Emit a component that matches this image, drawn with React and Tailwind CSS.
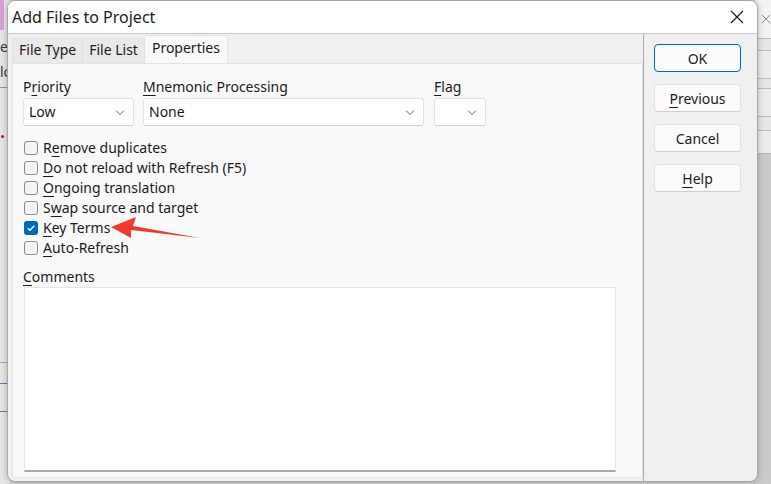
import React from 'react';

const font = { fontFamily: '"Noto Sans", "Open Sans", sans-serif' };

// letter with an access-key underline
const U = ({ children }) => <span className="underline underline-offset-[3px] decoration-1">{children}</span>;

const Chevron = () => (
  <svg width="12" height="12" viewBox="0 0 12 12" className="text-[#606060]">
    <path d="M2 4.5 L6 8.5 L10 4.5" fill="none" stroke="currentColor" strokeWidth="1" />
  </svg>
);

const Select = ({ value, className }) => (
  <div className={`h-[28px] bg-white border border-[#e3e3e3] border-b-[#d0d0d0] rounded-[3px] flex items-center justify-between pl-[5px] pr-[7px] text-[14px] text-[#1b1b1b] ${className}`}>
    <span className="-mt-[2px]">{value}</span>
    <Chevron />
  </div>
);

const Check = ({ checked, children }) => (
  <div className="h-[20px] flex items-center gap-[5px]">
    {checked ? (
      <div className="w-[14px] h-[14px] rounded-[3px] bg-[#0067c0] flex items-center justify-center">
        <svg width="10" height="10" viewBox="0 0 10 10">
          <path d="M1.8 5.2 L4 7.3 L8.3 2.8" fill="none" stroke="white" strokeWidth="1.3" />
        </svg>
      </div>
    ) : (
      <div className="w-[14px] h-[14px] rounded-[3px] border border-[#8c8c8c] bg-[#f4f4f4]" />
    )}
    <span className="text-[14px] text-[#1b1b1b] leading-none">{children}</span>
  </div>
);

const Btn = ({ children, primary }) => (
  <div className={`w-[87px] h-[28px] rounded-[4px] flex items-center justify-center text-[14px] text-[#1b1b1b] ${primary ? 'bg-[#fbfbfb] border border-[#0067c0]' : 'bg-[#fbfbfb] border border-[#e0e0e0] border-b-[#cfcfcf]'}`}>
    {children}
  </div>
);

export default function App() {
  return (
    <div className="w-[771px] h-[484px] bg-[#cfcfcf] relative overflow-hidden" style={font}>
      {/* window behind the dialog */}
      <div className="absolute left-0 top-0 w-[10px] h-[484px] bg-[#e6e6e6]">
        <div className="w-[4px] h-[30px] bg-[#d9a0d6]" />
        <div className="text-[14px] text-[#333] mt-[10px] leading-none">e</div>
        <div className="text-[14px] text-[#333] mt-[11px] leading-none">lc</div>
        <div className="h-px bg-[#999] mt-[8px]" />
        <div className="w-[3px] h-[3px] bg-[#a02020] rounded-full mt-[47px] ml-[1px]" />
        <div className="h-px bg-[#aaa] mt-[224px]" />
        <div className="h-px bg-[#4a7fb0] mt-[20px]" />
        <div className="h-px bg-[#4a7fb0] mt-[27px]" />
      </div>
      <div className="absolute right-0 top-0 w-[16px] h-[484px] bg-[#cacaca]">
        <div className="h-[38px] bg-[#f3f3f3] flex items-center justify-center text-[#777]">
          <svg width="12" height="12" viewBox="0 0 12 12" className="ml-[6px]"><path d="M1 1 L11 11 M11 1 L1 11" stroke="currentColor" strokeWidth="1" /></svg>
        </div>
        <div className="h-[12px] bg-[#e6e6e6] border-t border-[#bbb]" />
        <div className="h-[28px] bg-[#ececec] border-t border-[#bbb]" />
        <div className="h-[10px] bg-[#e6e6e6] border-t border-[#bbb]" />
        <div className="h-[28px] bg-[#ececec] border-t border-[#bbb]" />
        <div className="h-[14px] bg-[#e6e6e6] border-t border-[#bbb]" />
        <div className="h-[24px] bg-[#ececec] border-t border-b border-[#bbb]" />
      </div>

      {/* dialog */}
      <div className="absolute left-[7px] top-0 w-[751px] h-[482px] rounded-[8px] bg-[#f0f0f0] border border-[#a8a8a8] overflow-hidden flex flex-col shadow-[0_0_6px_rgba(0,0,0,0.25)]">
        <div className="h-[33px] shrink-0 bg-white border-b border-[#c9c9c9] flex items-center justify-between pl-[4px] pr-[13px]">
          <span className="text-[16px] text-[#1b1b1b] -mt-[1px]">Add Files to Project</span>
          <svg width="14" height="14" viewBox="0 0 14 14" className="text-[#1b1b1b]">
            <path d="M1 1 L13 13 M13 1 L1 13" stroke="currentColor" strokeWidth="1.2" />
          </svg>
        </div>

        <div className="flex-1 flex">
          {/* left: tabs + page */}
          <div className="w-[635px] pl-[4px] pt-[1px] pb-[3px] flex flex-col">
            <div className="h-[28px] flex items-end text-[14px] text-[#1b1b1b]">
              <div className="h-[25px] px-[6px] pb-[3px] flex items-center bg-[#e9e9e9] border border-b-0 border-[#e0e0e0]">File Type</div>
              <div className="h-[25px] px-[6px] pb-[3px] flex items-center bg-[#e9e9e9] border border-b-0 border-l-0 border-[#e0e0e0]">File List</div>
              <div className="h-[28px] px-[7px] pb-[5px] flex items-center bg-[#f9f9f9] border border-b-0 border-l-0 border-[#e3e3e3]">Properties</div>
            </div>
            <div className="flex-1 bg-[#f9f9f9] border border-[#e3e3e3] pl-[10px] pr-[26px] pt-[14px] pb-[5px] flex flex-col">
              <div className="flex gap-[9px]">
                <div className="w-[111px]">
                  <div className="h-[20px] text-[14px] text-[#1b1b1b] leading-[18px]">P<U>r</U>iority</div>
                  <Select value="Low" className="w-[111px]" />
                </div>
                <div>
                  <div className="h-[20px] text-[14px] text-[#1b1b1b] leading-[18px]"><U>M</U>nemonic Processing</div>
                  <Select value="None" className="w-[281px]" />
                </div>
                <div className="ml-[1px]">
                  <div className="h-[20px] text-[14px] text-[#1b1b1b] leading-[18px]"><U>F</U>lag</div>
                  <Select value="" className="w-[52px]" />
                </div>
              </div>

              <div className="mt-[12px] ml-[1px] flex flex-col">
                <Check>R<U>e</U>move duplicates</Check>
                <Check><U>D</U>o not reload with Refresh (F5)</Check>
                <Check><U>O</U>ngoing translation</Check>
                <Check>S<U>w</U>ap source and target</Check>
                <Check checked><U>K</U>ey Terms</Check>
                <Check><U>A</U>uto-Refresh</Check>
              </div>

              <div className="mt-[10px] h-[18px] text-[14px] text-[#1b1b1b] leading-[18px]"><U>C</U>omments</div>
              <div className="mt-[1px] ml-[1px] flex-1 bg-white border border-[#e6e6e6] border-b-2 border-b-[#a9a9a9]" />
            </div>
          </div>

          {/* right: buttons */}
          <div className="flex-1 border-l border-[#a9a9a9] pl-[10px] pt-[10px] flex flex-col gap-[12px]">
            <Btn primary>OK</Btn>
            <Btn><U>P</U>revious</Btn>
            <Btn>Cancel</Btn>
            <Btn><U>H</U>elp</Btn>
          </div>
        </div>
      </div>

      {/* red annotation arrow */}
      <svg className="absolute left-0 top-0 pointer-events-none" width="771" height="484">
        <polygon points="111,227 136,217 133,226 200,238 131,230 131,238" fill="#f03a2e" />
      </svg>
    </div>
  );
}
